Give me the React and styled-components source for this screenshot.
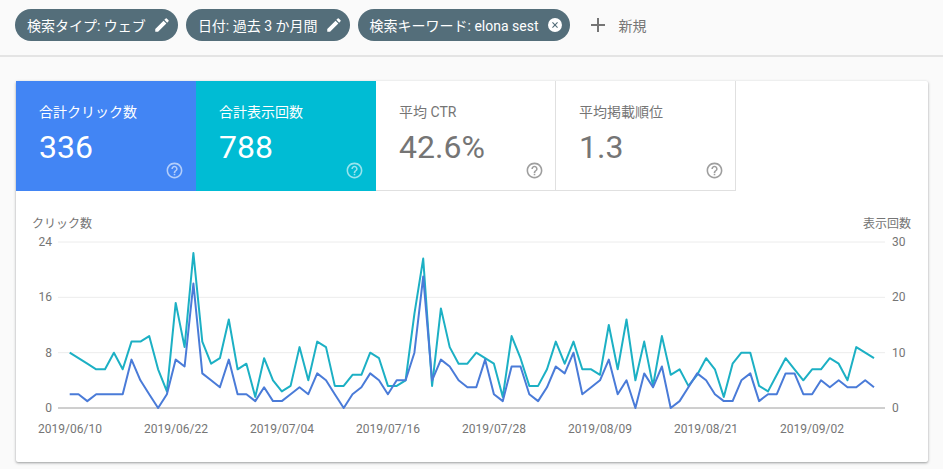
import React from "react";
import styled, { createGlobalStyle } from "styled-components";

const Global = createGlobalStyle`
  html, body { margin: 0; padding: 0; background: #fafafa; }
  body { width: 943px; height: 469px; overflow: hidden; font-family: Roboto, "Noto Sans CJK JP", sans-serif; }
`;

const Page = styled.div`
  width: 943px;
  height: 469px;
  display: flex;
  flex-direction: column;
  background: #fafafa;
`;

const FilterBar = styled.div`
  height: 57px;
  box-sizing: border-box;
  display: flex;
  align-items: flex-start;
  gap: 8px;
  padding: 9px 0 0 15px;
  background: #fafafa;
  border-bottom: 2px solid #e4e4e4;
  flex: none;
`;

const Chip = styled.div`
  height: 32px;
  box-sizing: border-box;
  display: flex;
  align-items: center;
  gap: 7px;
  padding: 0 ${p => (p.$close ? 6 : 7)}px 0 12px;
  border-radius: 16px;
  background: #546e7a;
  color: #fff;
  font-size: 14px;
  white-space: nowrap;
`;

const AddButton = styled.div`
  display: flex;
  align-items: center;
  height: 32px;
  gap: 9px;
  margin-left: 8px;
  color: #757575;
  font-size: 14px;
`;

const Card = styled.div`
  margin: 24px 15px 0 16px;
  height: 381px;
  background: #fff;
  box-shadow: 0 1px 3px rgba(60, 64, 67, 0.35), 0 1px 2px rgba(60, 64, 67, 0.2);
  border-radius: 2px;
  display: flex;
  flex-direction: column;
`;

const Tiles = styled.div`
  display: flex;
  flex: none;
`;

const Tile = styled.div`
  position: relative;
  width: 180px;
  height: 110px;
  box-sizing: border-box;
  padding: 21px 23px 0;
  background: ${p => p.$bg || "#fff"};
  color: ${p => (p.$bg ? "#fff" : "#757575")};
  border-right: 1px solid ${p => (p.$bg ? "transparent" : "#e0e0e0")};
  border-bottom: 1px solid ${p => (p.$bg ? "transparent" : "#e0e0e0")};
`;

const TileLabel = styled.div`
  font-size: 14px;
  line-height: 20px;
`;

const TileValue = styled.div`
  font-size: 32px;
  line-height: 38px;
  margin-top: 6px;
`;

const Help = styled.svg`
  position: absolute;
  right: 11px;
  bottom: 10.5px;
  width: 19px;
  height: 19px;
  opacity: ${p => (p.$light ? 0.6 : 1)};
`;

const ChartArea = styled.div`
  flex: 1;
`;

const ChartSvg = styled.svg`
  display: block;
  width: 912px;
  height: 271px;
`;

const AxisText = styled.text`
  font-family: Roboto, "Noto Sans CJK JP", sans-serif;
  font-size: 12px;
  fill: #757575;
`;

const Pencil = () => (
  <svg width="18" height="18" viewBox="0 0 24 24" fill="#fff">
    <path d="M3 17.25V21h3.75L17.81 9.94l-3.75-3.75L3 17.25zM20.71 7.04a1 1 0 0 0 0-1.41l-2.34-2.34a1 1 0 0 0-1.41 0l-1.83 1.83 3.75 3.75 1.83-1.83z" />
  </svg>
);

const CloseCircle = () => (
  <svg width="18" height="18" viewBox="0 0 24 24">
    <circle cx="12" cy="12" r="9.3" fill="#fff" />
    <path d="M8.6 8.6l6.8 6.8M15.4 8.6l-6.8 6.8" stroke="#546e7a" strokeWidth="1.5" fill="none" />
  </svg>
);

const Plus = () => (
  <svg width="24" height="24" viewBox="0 0 24 24" fill="#757575">
    <path d="M19 13h-6v6h-2v-6H5v-2h6V5h2v6h6v2z" />
  </svg>
);

const HelpIcon = ({ color, light }) => (
  <Help $light={light} viewBox="0 0 24 24" fill={color}>
    <path d="M11 18h2v-2h-2v2zm1-16C6.48 2 2 6.48 2 12s4.48 10 10 10 10-4.48 10-10S17.52 2 12 2zm0 18c-4.41 0-8-3.59-8-8s3.59-8 8-8 8 3.59 8 8-3.59 8-8 8zm0-14c-2.21 0-4 1.79-4 4h2c0-1.1.9-2 2-2s2 .9 2 2c0 2-3 1.75-3 5h2c0-2.25 3-2.5 3-5 0-2.21-1.79-4-4-4z" />
  </Help>
);

const impressions = [
  10,9,8,7,7,10,7,12,12,13,7,3,19,11,28,12,8,9,16,7,8,2,9,5,3,4,11,5,12,11,4,4,6,6,10,9,4,4,5,17,27,4,18,11,8,8,10,9,8,2,13,9,4,4,7,12,8,12,7,7,6,15,7,16,5,12,4,13,6,7,4,6,9,7,2,8,10,10,4,3,6,9,7,5,7,7,9,8,5,11,10,9,
];
const clicks = [
  2,2,1,2,2,2,2,7,4,2,0,2,7,6,18,5,4,3,7,2,2,1,3,1,1,2,3,2,5,4,2,0,2,3,5,4,2,4,4,8,19,4,7,6,4,3,3,7,2,1,6,6,2,1,3,6,5,8,2,3,4,7,2,4,0,5,3,6,0,1,3,5,4,2,1,1,4,5,1,2,2,5,5,2,2,4,3,4,3,3,4,3,
];

const X0 = 53.67;
const STEP = 8.839;
const BASE = 217;
const TOP = 51;
const H = BASE - TOP;
const pts = (data, max) =>
  data.map((v, i) => `${(X0 + STEP * i).toFixed(1)},${(BASE - (v / max) * H).toFixed(1)}`).join(" ");

const dates = ["2019/06/10","2019/06/22","2019/07/04","2019/07/16","2019/07/28","2019/08/09","2019/08/21","2019/09/02"];

const Chart = () => (
  <ChartSvg viewBox="0 0 912 271">
    <AxisText x="16" y="37">クリック数</AxisText>
    <AxisText x="895" y="37" textAnchor="end">表示回数</AxisText>
    {[0, 1, 2].map(i => (
      <line key={i} x1="42" x2="869" y1={TOP + i * (H / 3)} y2={TOP + i * (H / 3)} stroke="#ececec" />
    ))}
    <line x1="42" x2="869" y1={BASE} y2={BASE} stroke="#9e9e9e" />
    {["24", "16", "8", "0"].map((t, i) => (
      <AxisText key={t} x="36" y={TOP + 4 + i * (H / 3)} textAnchor="end">{t}</AxisText>
    ))}
    {["30", "20", "10", "0"].map((t, i) => (
      <AxisText key={t} x="876" y={TOP + 4 + i * (H / 3)}>{t}</AxisText>
    ))}
    {dates.map((d, i) => (
      <AxisText key={d} x={54 + i * 106} y={BASE + 25} textAnchor="middle">{d}</AxisText>
    ))}
    <polyline points={pts(impressions, 30)} fill="none" stroke="#1cb0c4" strokeWidth="2" strokeLinejoin="round" />
    <polyline points={pts(clicks, 24)} fill="none" stroke="#4a7bd8" strokeWidth="2" strokeLinejoin="round" />
  </ChartSvg>
);

const tiles = [
  { label: "合計クリック数", value: "336", bg: "#4285f4" },
  { label: "合計表示回数", value: "788", bg: "#00bcd4" },
  { label: "平均 CTR", value: "42.6%" },
  { label: "平均掲載順位", value: "1.3" },
];

export default function App() {
  return (
    <Page>
      <Global />
      <FilterBar>
        <Chip>検索タイプ: ウェブ<Pencil /></Chip>
        <Chip>日付: 過去 3 か月間<Pencil /></Chip>
        <Chip $close>検索キーワード: elona sest<CloseCircle /></Chip>
        <AddButton><Plus />新規</AddButton>
      </FilterBar>
      <Card>
        <Tiles>
          {tiles.map(t => (
            <Tile key={t.label} $bg={t.bg}>
              <TileLabel>{t.label}</TileLabel>
              <TileValue>{t.value}</TileValue>
              <HelpIcon color={t.bg ? "#fff" : "#9e9e9e"} light={!!t.bg} />
            </Tile>
          ))}
        </Tiles>
        <ChartArea>
          <Chart />
        </ChartArea>
      </Card>
    </Page>
  );
}
